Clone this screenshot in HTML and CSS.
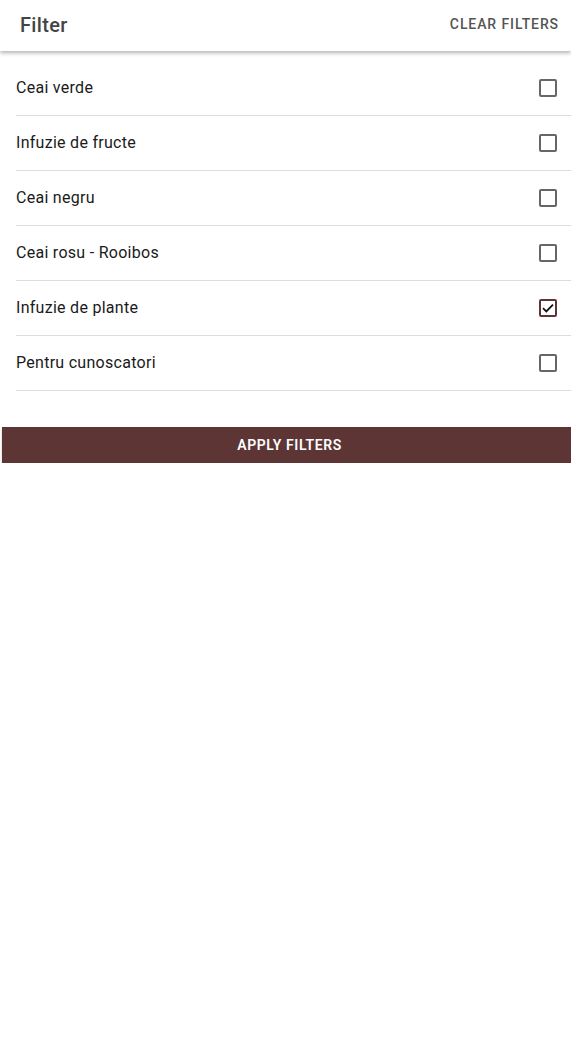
FILE: index.html
```html
<!DOCTYPE html>
<html>
<head>
<meta charset="utf-8">
<link rel="stylesheet" href="styles.css">
</head>
<body>
<header class="bar">
  <h1 class="title">Filter</h1>
  <span class="clear">CLEAR FILTERS</span>
</header>
<ul class="list">
  <li class="row"><span class="label">Ceai verde</span><span class="box"></span></li>
  <li class="row"><span class="label">Infuzie de fructe</span><span class="box"></span></li>
  <li class="row"><span class="label">Ceai negru</span><span class="box"></span></li>
  <li class="row"><span class="label">Ceai rosu - Rooibos</span><span class="box"></span></li>
  <li class="row"><span class="label">Infuzie de plante</span><span class="box checked"><svg viewBox="0 0 14 14" width="14" height="14"><path d="M2 7.2 L5.3 10.4 L12 3.6" fill="none" stroke="#111" stroke-width="1.8"/></svg></span></li>
  <li class="row"><span class="label">Pentru cunoscatori</span><span class="box"></span></li>
</ul>
<button class="apply">APPLY FILTERS</button>
</body>
</html>
```

FILE: styles.css
```css
html, body {
  margin: 0;
  padding: 0;
  background: #fff;
  font-family: Roboto, "Liberation Sans", sans-serif;
  overflow-x: hidden;
}
.bar {
  height: 51px;
  display: flex;
  align-items: center;
  justify-content: space-between;
  padding: 0 12px 0 20px;
  box-shadow: 0 2px 4px rgba(0,0,0,0.3);
  position: relative;
}
.title {
  margin: -2px 0 0 0;
  font-size: 20px;
  font-weight: 500;
  letter-spacing: 0.35px;
  color: #444;
}
.clear {
  font-size: 14px;
  font-weight: 500;
  letter-spacing: 0.9px;
  color: #555;
  margin-top: -3px;
}
.list {
  list-style: none;
  margin: 10px 0 0 16px;
  padding: 0;
}
.row {
  height: 54px;
  border-bottom: 1px solid #ddd;
  display: flex;
  align-items: center;
  justify-content: space-between;
  padding-right: 14px;
  font-size: 16px;
  letter-spacing: 0.28px;
  color: #1a1a1a;
}
.label {
  margin-top: -2px;
}
.box {
  width: 14px;
  height: 14px;
  border: 2px solid #666;
  border-radius: 2px;
  display: flex;
  align-items: center;
  justify-content: center;
}
.box.checked {
  border-color: #5d3535;
}
.apply {
  display: block;
  margin: 36px 0 0 2px;
  width: calc(100% - 2px);
  height: 36px;
  padding: 0 0 0 6px;
  border: none;
  background: #5d3535;
  color: #fff;
  font-family: Roboto, "Liberation Sans", sans-serif;
  font-size: 14px;
  font-weight: 600;
  letter-spacing: 0.6px;
  box-shadow: 0 2px 2px rgba(0,0,0,0.25);
}
```
